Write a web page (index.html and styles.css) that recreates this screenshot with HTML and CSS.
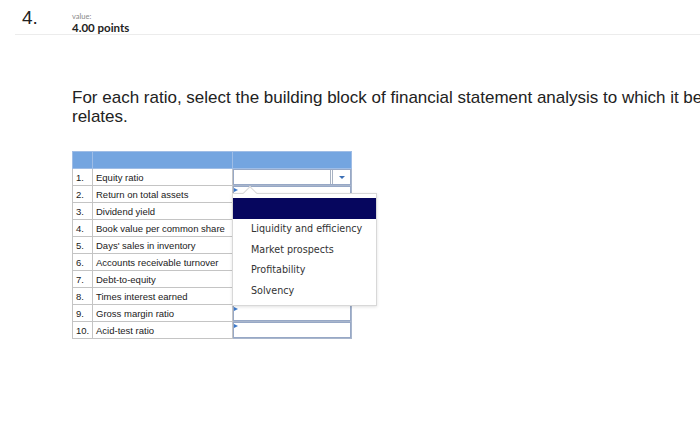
FILE: index.html
```html
<!DOCTYPE html>
<html>
<head>
<meta charset="utf-8">
<link rel="stylesheet" href="styles.css">
</head>
<body>
<div class="page">
  <header class="qhead">
    <div class="qnum">4.</div>
    <div class="qmeta">
      <div class="vlabel">value:</div>
      <div class="vpoints">4.00 points</div>
    </div>
  </header>
  <p class="prompt">For each ratio, select the building block of financial statement analysis to which it best relates.</p>
  <div class="matching">
    <table class="grid">
      <colgroup><col class="cn"><col class="ct"><col class="ca"></colgroup>
      <thead>
        <tr><th class="n"></th><th class="t"></th><th class="a"></th></tr>
      </thead>
      <tbody>
        <tr><td class="n">1.</td><td class="t">Equity ratio</td><td class="a"><div class="select"><span class="btn"><span class="caret"></span></span></div></td></tr>
        <tr><td class="n">2.</td><td class="t">Return on total assets</td><td class="a"><div class="box"><span class="mark"></span></div></td></tr>
        <tr><td class="n">3.</td><td class="t">Dividend yield</td><td class="a"><div class="box"><span class="mark"></span></div></td></tr>
        <tr><td class="n">4.</td><td class="t">Book value per common share</td><td class="a"><div class="box"><span class="mark"></span></div></td></tr>
        <tr><td class="n">5.</td><td class="t">Days' sales in inventory</td><td class="a"><div class="box"><span class="mark"></span></div></td></tr>
        <tr><td class="n">6.</td><td class="t">Accounts receivable turnover</td><td class="a"><div class="box"><span class="mark"></span></div></td></tr>
        <tr><td class="n">7.</td><td class="t">Debt-to-equity</td><td class="a"><div class="box"><span class="mark"></span></div></td></tr>
        <tr><td class="n">8.</td><td class="t">Times interest earned</td><td class="a"><div class="box"><span class="mark"></span></div></td></tr>
        <tr><td class="n">9.</td><td class="t">Gross margin ratio</td><td class="a"><div class="box"><span class="mark"></span></div></td></tr>
        <tr><td class="n">10.</td><td class="t">Acid-test ratio</td><td class="a"><div class="box"><span class="mark"></span></div></td></tr>
      </tbody>
    </table>
    <div class="popup">
      <span class="notch"></span>
      <ul class="options">
        <li class="opt active"></li>
        <li class="opt">Liquidity and efficiency</li>
        <li class="opt">Market prospects</li>
        <li class="opt">Profitability</li>
        <li class="opt">Solvency</li>
      </ul>
    </div>
  </div>
</div>
</body>
</html>
```
FILE: styles.css
```css
html, body {
  margin: 0;
  padding: 0;
  background: #fff;
  overflow: hidden;
}
.page {
  width: 700px;
  height: 422px;
  position: relative;
  font-family: "Liberation Sans", Arial, sans-serif;
  color: #222;
  overflow: hidden;
}
.qhead {
  margin-left: 15px;
  height: 35px;
  box-sizing: border-box;
  border-bottom: 1px solid #ececec;
  display: flex;
  align-items: flex-start;
  padding-left: 7px;
}
.qnum {
  font-family: "Liberation Sans", Arial, sans-serif;
  font-size: 19px;
  line-height: 22px;
  margin-top: 7px;
  width: 50px;
  color: #222;
}
.qmeta {
  padding-top: 12px;
}
.vlabel {
  font-family: "Lato", sans-serif;
  font-size: 7.5px;
  line-height: 9px;
  color: #888;
}
.vpoints {
  font-family: "Lato", sans-serif;
  font-weight: 700;
  font-size: 11.5px;
  line-height: 14px;
  color: #222;
}
.prompt {
  margin: 53px 0 0 72px;
  width: 700px;
  font-size: 17px;
  line-height: 19px;
  color: #222;
}
.matching {
  position: relative;
  margin: 25px 0 0 72px;
  width: 320px;
}
.grid {
  border-collapse: collapse;
  table-layout: fixed;
  width: 279px;
  font-size: 9.5px;
  color: #1a1a1a;
}
.cn { width: 20px; }
.ct { width: 140px; }
.ca { width: 119px; }
.grid th {
  background: #74a5e0;
  height: 16px;
  padding: 0;
  border: 1px solid #9fbde6;
}
.grid td {
  height: 17px;
  padding: 0;
  box-sizing: border-box;
  border: 1px solid #c4c4c4;
  vertical-align: middle;
  white-space: nowrap;
  overflow: hidden;
}
.grid td.n {
  padding-left: 3px;
}
.grid td.t {
  padding-left: 3px;
}
.grid td.a {
  border-color: #a9b6cc;
  position: relative;
}
.box, .select {
  height: 16px;
  box-sizing: border-box;
  border: 1px solid #97a8c6;
  position: relative;
}
.mark {
  position: absolute;
  left: 0;
  top: 1px;
  width: 0;
  height: 0;
  border-top: 2.5px solid transparent;
  border-bottom: 2.5px solid transparent;
  border-left: 4px solid #3b78c9;
}
.select {
  display: flex;
  justify-content: flex-end;
  background: #fff;
}
.btn {
  width: 17px;
  border-left: 3px double #a8b2c2;
  display: flex;
  align-items: center;
  justify-content: center;
}
.caret {
  width: 0;
  height: 0;
  border-left: 3px solid transparent;
  border-right: 3px solid transparent;
  border-top: 3px solid #3b6fb5;
}
.popup {
  position: absolute;
  left: 160px;
  top: 42px;
  width: 145px;
  box-sizing: border-box;
  background: #fff;
  border: 1px solid #d8d8d8;
  box-shadow: 0 1px 3px rgba(0,0,0,0.12);
  padding: 4px 0 3px;
}
.notch {
  position: absolute;
  left: 12px;
  top: -6px;
  width: 9px;
  height: 9px;
  background: #fff;
  border-left: 1px solid #d8d8d8;
  border-top: 1px solid #d8d8d8;
  transform: rotate(45deg);
}
.options {
  list-style: none;
  margin: 0;
  padding: 0;
  position: relative;
}
.opt {
  height: 20.8px;
  line-height: 20.8px;
  padding-left: 18px;
  font-family: "DejaVu Sans", Verdana, sans-serif;
  font-size: 9.6px;
  color: #333;
  white-space: nowrap;
}
.opt.active {
  background: #06065e;
}
```
